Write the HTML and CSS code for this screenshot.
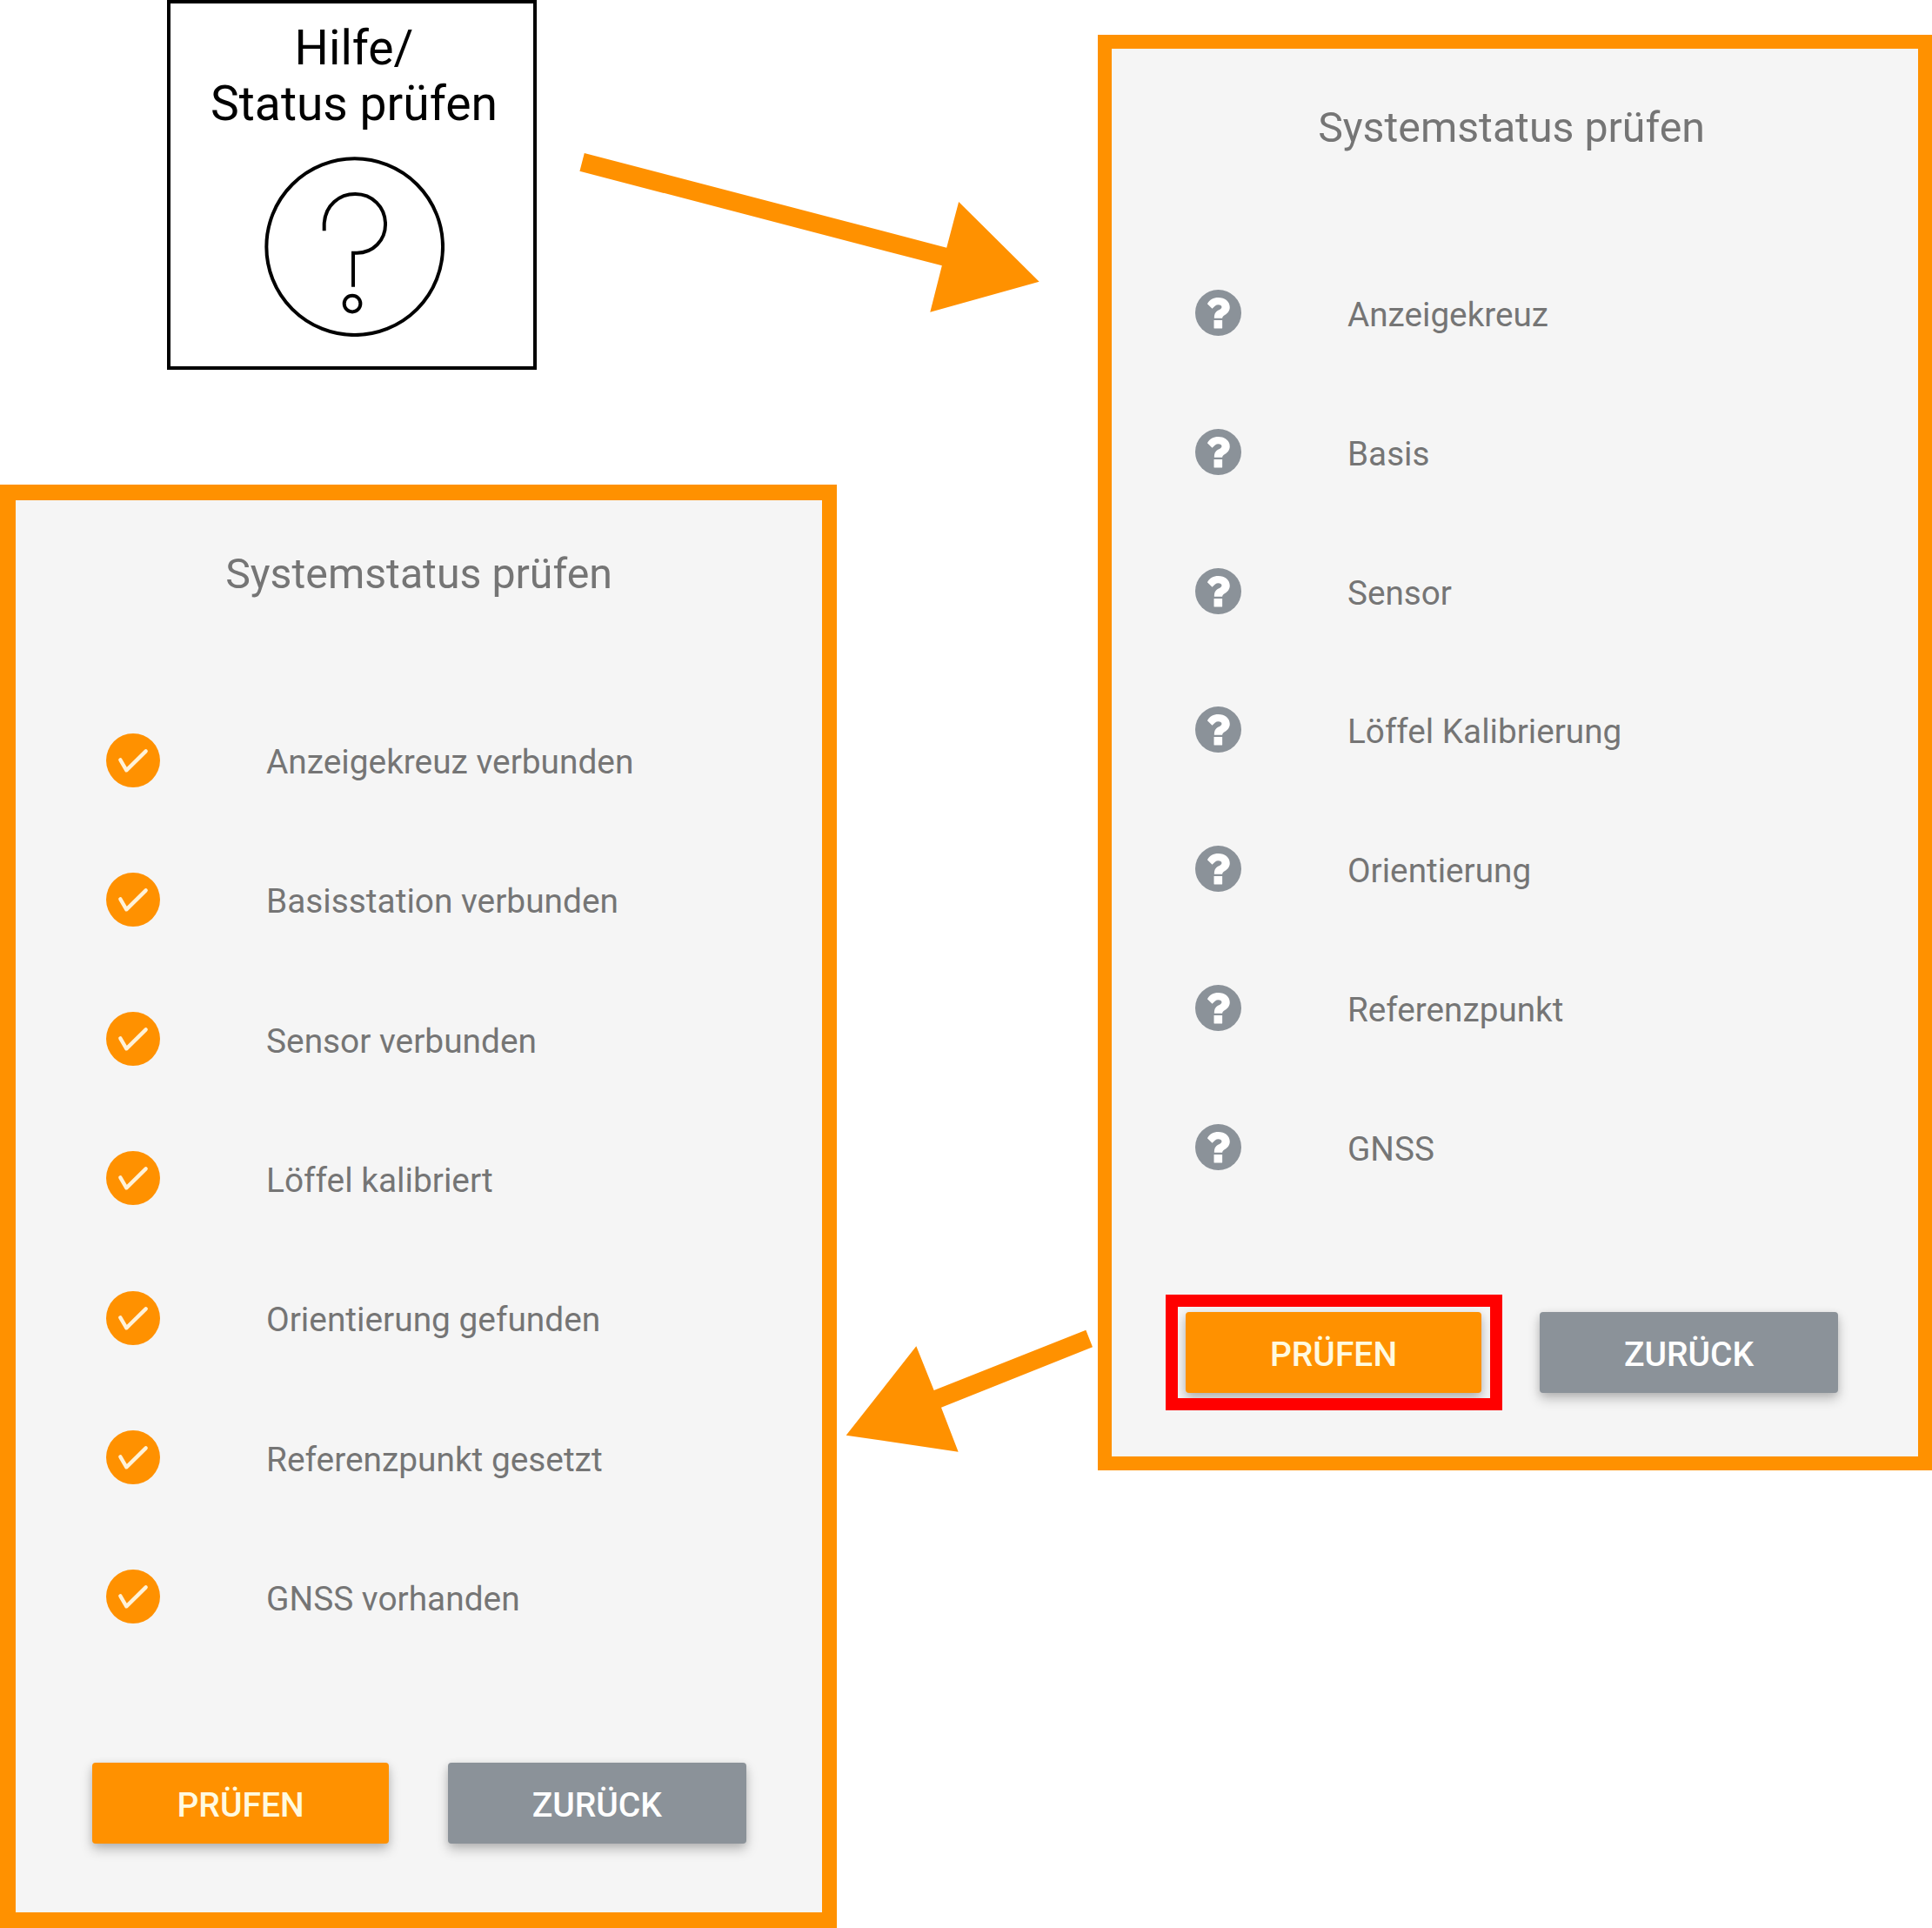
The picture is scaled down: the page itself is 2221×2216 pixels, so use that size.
FILE: index.html
```html
<!DOCTYPE html>
<html lang="de">
<head>
<meta charset="utf-8">
<title>Systemstatus prüfen</title>
<link rel="stylesheet" href="styles.css">
</head>
<body>
<svg class="defs" width="0" height="0" aria-hidden="true">
  <symbol id="unknown" viewBox="0 0 160 160">
    <circle cx="80" cy="80" r="80" fill="#8b9299"/>
    <path d="M42 49C50 34 63 27 80 27C103 27 120 41 120 60C120 74 112 81 104 87C97 92 94 94 94 99H66C66 84 70 78 79 72C87 67 92 65 92 60C92 55 87 52 80 52C72 52 67 57 59 66Z" fill="#fff"/>
    <rect x="65" y="106" width="29" height="28" rx="1" fill="#fff"/>
  </symbol>
  <symbol id="ok" viewBox="0 0 186 186">
    <circle cx="93" cy="93" r="93" fill="#ff9100"/>
    <path d="M49 91L70 127L137 61" fill="none" stroke="#fff2d8" stroke-width="13" stroke-linecap="round" stroke-linejoin="round"/>
  </symbol>
</svg>
<main class="guide">
  <div class="column column-left">
    <section class="tile">
      <h2 class="tile-title">Hilfe/<br>Status prüfen</h2>
      <svg class="tile-icon" viewBox="371 539 622 622" fill="none" stroke="#000" stroke-width="12">
        <circle cx="682" cy="850" r="304"/>
        <path d="M577 795V772C580 705 630 668 684 668C742 668 788 712 788 773C788 828 745 871 690 871H677V988"/>
        <circle cx="674" cy="1046" r="28"/>
      </svg>
    </section>
    <section class="panel panel-result">
      <h1 class="panel-title">Systemstatus prüfen</h1>
      <ul class="status-list">
        <li class="status"><svg class="status-icon"><use href="#ok"/></svg><span>Anzeigekreuz verbunden</span></li>
        <li class="status"><svg class="status-icon"><use href="#ok"/></svg><span>Basisstation verbunden</span></li>
        <li class="status"><svg class="status-icon"><use href="#ok"/></svg><span>Sensor verbunden</span></li>
        <li class="status"><svg class="status-icon"><use href="#ok"/></svg><span>Löffel kalibriert</span></li>
        <li class="status"><svg class="status-icon"><use href="#ok"/></svg><span>Orientierung gefunden</span></li>
        <li class="status"><svg class="status-icon"><use href="#ok"/></svg><span>Referenzpunkt gesetzt</span></li>
        <li class="status"><svg class="status-icon"><use href="#ok"/></svg><span>GNSS vorhanden</span></li>
      </ul>
      <div class="actions">
        <button class="button button-primary">PRÜFEN</button>
        <button class="button button-secondary">ZURÜCK</button>
      </div>
    </section>
  </div>
  <div class="column column-right">
    <section class="panel panel-start">
      <h1 class="panel-title">Systemstatus prüfen</h1>
      <ul class="status-list">
        <li class="status"><svg class="status-icon"><use href="#unknown"/></svg><span>Anzeigekreuz</span></li>
        <li class="status"><svg class="status-icon"><use href="#unknown"/></svg><span>Basis</span></li>
        <li class="status"><svg class="status-icon"><use href="#unknown"/></svg><span>Sensor</span></li>
        <li class="status"><svg class="status-icon"><use href="#unknown"/></svg><span>Löffel Kalibrierung</span></li>
        <li class="status"><svg class="status-icon"><use href="#unknown"/></svg><span>Orientierung</span></li>
        <li class="status"><svg class="status-icon"><use href="#unknown"/></svg><span>Referenzpunkt</span></li>
        <li class="status"><svg class="status-icon"><use href="#unknown"/></svg><span>GNSS</span></li>
      </ul>
      <div class="actions">
        <div class="target">
          <button class="button button-primary">PRÜFEN</button>
          <span class="highlight"></span>
        </div>
        <button class="button button-secondary">ZURÜCK</button>
      </div>
    </section>
  </div>
  <svg class="arrow arrow-to-start" viewBox="0 0 1568 630" preserveAspectRatio="none"><path d="M61 48L1227 374L1266 216L1525 491L1174 596L1212 436L46 110Z"/></svg>
  <svg class="arrow arrow-to-result" viewBox="0 0 960 570"><path d="M895 86L918 145L396 353L455 506L68 449L310 142L371 294Z"/></svg>
</main>
</body>
</html>
```
FILE: styles.css
```css
* { box-sizing: border-box; }

body {
  margin: 0;
  background: #fff;
  font-family: Roboto, "Liberation Sans", sans-serif;
}

.defs { position: absolute; }

.guide {
  position: relative;
  display: flex;
  justify-content: space-between;
  width: 2221px;
  height: 2216px;
  overflow: hidden;
}

.column { display: flex; flex-direction: column; }
.column-left { width: 962px; gap: 132px; }
.column-right { width: 959px; padding-top: 40px; }

.tile {
  display: flex;
  flex-direction: column;
  align-items: center;
  width: 425px;
  height: 425px;
  margin-left: 192px;
  padding-top: 19px;
  border: 4px solid #000;
}

.tile-title {
  margin: 0;
  padding-left: 5px;
  color: #000;
  font-size: 55.2px;
  font-weight: 400;
  line-height: 64px;
  text-align: center;
  white-space: nowrap;
}

.tile-icon {
  width: 207.4px;
  height: 207.4px;
  margin: 29px 0 0 5.5px;
}

.panel {
  display: flex;
  flex-direction: column;
  background: #f5f5f5;
  color: #757575;
}

.panel-start {
  height: 1650px;
  border: 16px solid #ff9100;
  padding-top: 59px;
}

.panel-result {
  height: 1659px;
  border: 18px solid #ff9100;
  border-right-width: 17px;
  padding-top: 53px;
}

.panel-title {
  height: 64px;
  margin: 0;
  font-size: 48.25px;
  font-weight: 400;
  line-height: 64px;
  text-align: center;
  white-space: nowrap;
}
.panel-start .panel-title { padding-right: 8px; }

.status-list {
  display: flex;
  flex-direction: column;
  margin: 0;
  padding: 0;
  list-style: none;
}

.status {
  display: flex;
  align-items: center;
  white-space: nowrap;
}
.status span { padding-top: 4px; }
.status-icon { flex: none; display: block; }

.panel-start .status-list { padding: 100.6px 0 0 96.3px; }
.panel-start .status { height: 159.8px; gap: 121.7px; font-size: 38.7px; }
.panel-start .status-icon { width: 53px; height: 53px; }

.panel-result .status-list { padding: 101.4px 0 0 104.3px; }
.panel-result .status { height: 160.3px; gap: 121.7px; font-size: 38.85px; }
.panel-result .status-icon { width: 62px; height: 62px; }

.actions { display: flex; }
.panel-start .actions { gap: 67px; padding: 110.2px 0 0 85px; }
.panel-result .actions { gap: 68px; padding: 110.8px 0 0 88.3px; }

.button {
  height: 92.3px;
  padding: 5px 0 0;
  border: 0;
  border-radius: 4px;
  font-family: inherit;
  font-size: 39px;
  font-weight: 500;
  box-shadow: 0 7px 14px rgba(0, 0, 0, 0.22), 0 2px 8px rgba(0, 0, 0, 0.1);
}
.button-primary { width: 340px; background: #ff9100; color: #fffae0; }
.button-secondary { width: 343px; background: #8b9299; color: #fff; }
.panel-result .button-primary { width: 340.5px; }

.target { position: relative; }
.highlight {
  position: absolute;
  inset: -20.3px -24px -20.5px -23px;
  border: 14px solid #f00;
}

.arrow { position: absolute; fill: #ff9100; overflow: visible; }
.arrow-to-start { left: 650px; top: 160px; width: 560px; height: 210px; }
.arrow-to-result { left: 950px; top: 1500px; width: 320px; height: 190px; }
```
